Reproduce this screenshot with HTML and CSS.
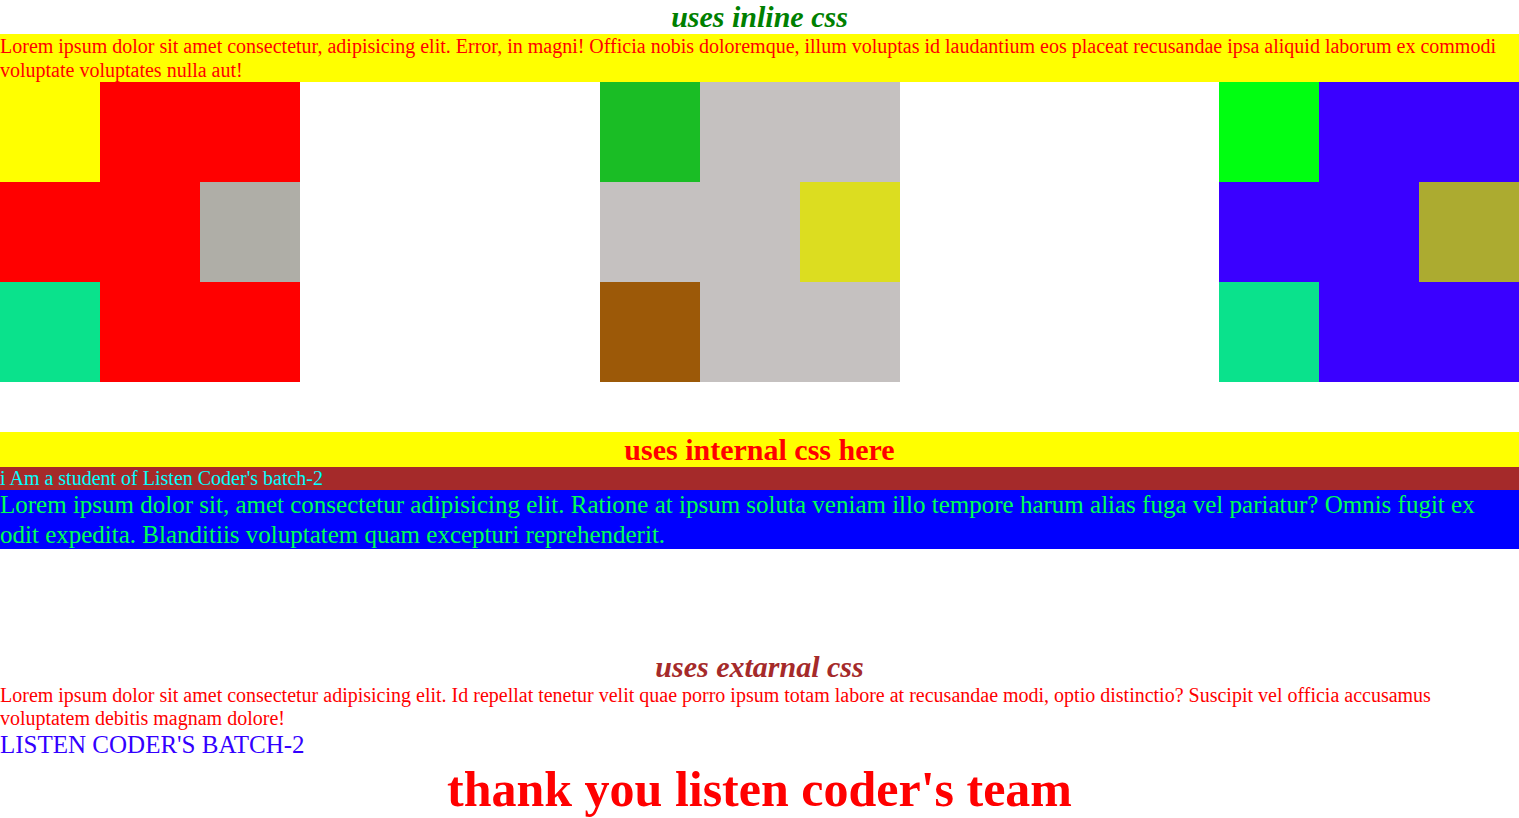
FILE: index.html
```html
<!DOCTYPE html>
<html>
<head>
<meta charset="utf-8">
<title>css types</title>
<link rel="stylesheet" href="styles.css">
</head>
<body>
<h2 class="inline-title">uses inline css</h2>
<p class="inline-para">Lorem ipsum dolor sit amet consectetur, adipisicing elit. Error, in magni! Officia nobis doloremque, illum voluptas id laudantium eos placeat recusandae ipsa aliquid laborum ex commodi voluptate voluptates nulla aut!</p>
<div class="boxes">
  <div class="box box-red">
    <div class="cell c-yellow"></div>
    <div class="cell c-gap"></div>
    <div class="cell c-gap"></div>
    <div class="cell c-gap"></div>
    <div class="cell c-gap"></div>
    <div class="cell c-gray"></div>
    <div class="cell c-teal"></div>
  </div>
  <div class="box box-gray">
    <div class="cell c-green"></div>
    <div class="cell c-gap"></div>
    <div class="cell c-gap"></div>
    <div class="cell c-gap"></div>
    <div class="cell c-gap"></div>
    <div class="cell c-lemon"></div>
    <div class="cell c-brown"></div>
  </div>
  <div class="box box-blue">
    <div class="cell c-lime"></div>
    <div class="cell c-gap"></div>
    <div class="cell c-gap"></div>
    <div class="cell c-gap"></div>
    <div class="cell c-gap"></div>
    <div class="cell c-olive"></div>
    <div class="cell c-teal"></div>
  </div>
</div>
<h2 class="internal-title">uses internal css here</h2>
<p class="student">i Am a student of Listen Coder's batch-2</p>
<p class="internal-para">Lorem ipsum dolor sit, amet consectetur adipisicing elit. Ratione at ipsum soluta veniam illo tempore harum alias fuga vel pariatur? Omnis fugit ex odit expedita. Blanditiis voluptatem quam excepturi reprehenderit.</p>
<h2 class="external-title">uses extarnal css</h2>
<p class="external-para">Lorem ipsum dolor sit amet consectetur adipisicing elit. Id repellat tenetur velit quae porro ipsum totam labore at recusandae modi, optio distinctio? Suscipit vel officia accusamus voluptatem debitis magnam dolore!</p>
<p class="batch">LISTEN CODER'S BATCH-2</p>
<h1 class="thanks">thank you listen coder's team</h1>
</body>
</html>
```
FILE: styles.css
```css
body {
  margin: 0;
  font-family: "Liberation Serif", "Times New Roman", serif;
  background: #ffffff;
}
.inline-title {
  margin: 0;
  font-size: 30px;
  font-style: italic;
  color: green;
  text-align: center;
  line-height: 34px;
}
.inline-para {
  margin: 0;
  background: yellow;
  color: red;
  font-size: 20px;
  line-height: 24px;
}
.boxes {
  display: flex;
  margin-bottom: 50px;
}
.box {
  width: 300px;
  height: 300px;
  display: grid;
  grid-template-columns: repeat(3, 100px);
  grid-template-rows: repeat(3, 100px);
}
.box-red { background: #ff0000; }
.box-gray { background: #c5c1c0; margin-left: 300px; }
.box-blue { background: #3a00ff; margin-left: auto; }
.c-yellow { background: #ffff00; }
.c-gray { background: #afaea7; }
.c-teal { background: #0ae28c; }
.c-green { background: #1abd25; }
.c-lemon { background: #dcdd20; }
.c-brown { background: #9c5908; }
.c-lime { background: #00ff11; }
.c-olive { background: #acab30; }
.internal-title {
  margin: 0;
  background: yellow;
  color: red;
  text-align: center;
  font-size: 30px;
  line-height: 35px;
}
.student {
  margin: 0;
  background: #a52a2a;
  color: cyan;
  font-size: 20px;
  line-height: 23px;
}
.internal-para {
  margin: 0;
  background: blue;
  color: #00ff55;
  font-size: 25px;
  line-height: 29.5px;
}
.external-title {
  margin: 100px 0 0;
  color: #a52a2a;
  font-style: italic;
  text-align: center;
  font-size: 30px;
  line-height: 35px;
}
.external-para {
  margin: 0;
  color: red;
  font-size: 20px;
  line-height: 23px;
}
.batch {
  margin: 0;
  color: #3300ff;
  font-size: 25px;
  line-height: 30px;
}
.thanks {
  margin: 0;
  color: red;
  text-align: center;
  font-size: 50px;
  line-height: 58px;
}
```
